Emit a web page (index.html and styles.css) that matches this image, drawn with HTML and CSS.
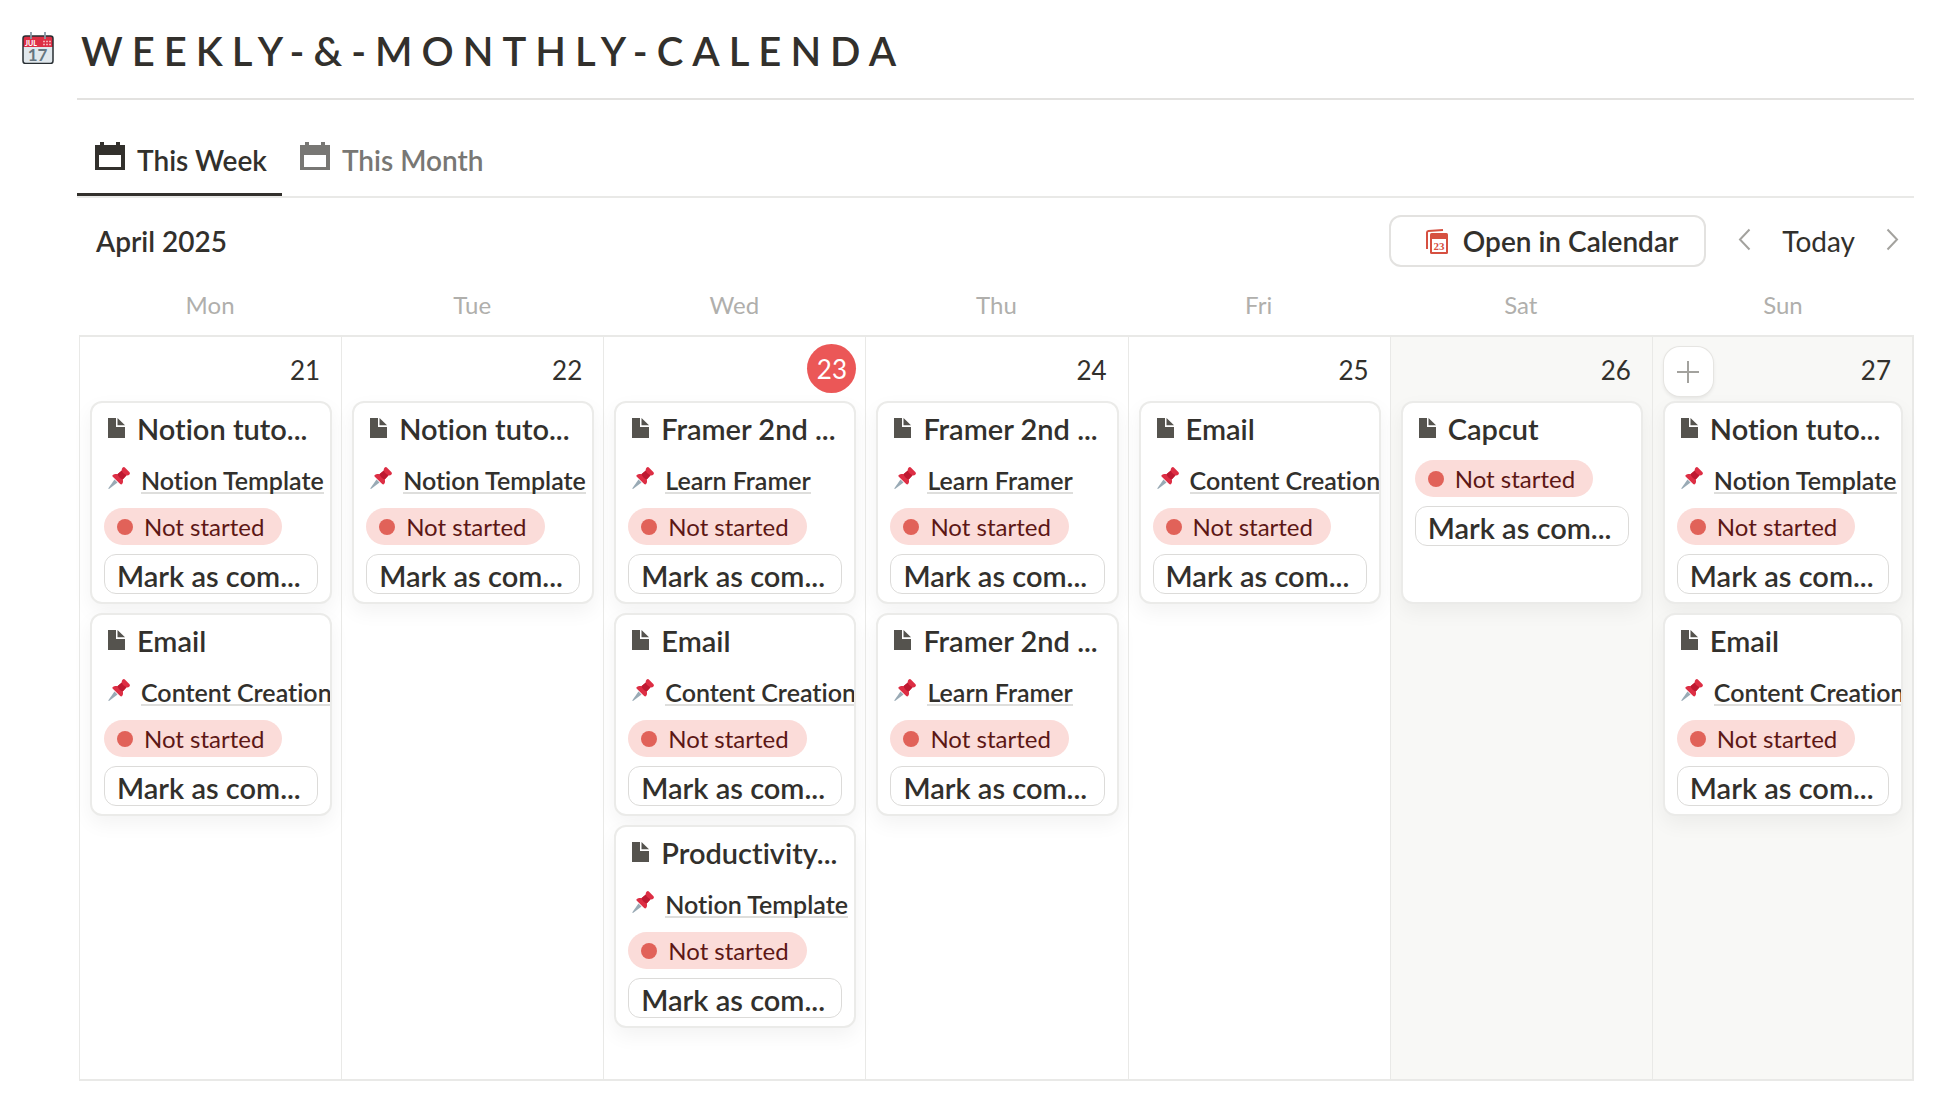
FILE: index.html
```html
<!DOCTYPE html>
<html lang="en">
<head>
<meta charset="utf-8">
<title>Weekly &amp; Monthly Calendar</title>
<link rel="stylesheet" href="styles.css">
</head>
<body>
<svg class="sprite" aria-hidden="true">
  <symbol id="i-page" viewBox="0 0 17 20"><path fill="#55534e" d="M0 0h8v9h9v11H0z"/><path fill="#55534e" d="M9.500 0L17 7.200H9.500z"/></symbol>
  <symbol id="i-pin" viewBox="0 0 22 22">
    <path fill="#99aab5" d="M6.500 12.500l3 3L1 22l-.8-.6z"/>
    <path fill="#dd2e44" d="M14.500.8c.9-.9 1.800-.9 2.600-.1l4.200 4.200c.9.900.8 2-.1 2.800-.7.700-1.700.9-2.600.6l-3.900 4.200c.6 1.500.5 3.200-.6 4.600-.5.600-1.300.6-1.900 0L4.800 9.800c-.6-.6-.6-1.400 0-1.900 1.400-1.100 3.100-1.200 4.600-.6l4.400-3.900c-.2-.9 0-1.900.7-2.600z"/>
    <path fill="#be1931" d="M9.400 7.300l4.400-3.900c.3 1.200 1 2.300 1.900 3.200s1.900 1.500 2.900 1.700l-3.900 4.200c-1.100-.4-2.300-1-3.300-2-1-1.100-1.700-2.200-2-3.200z"/>
  </symbol>
  <symbol id="i-cal" viewBox="0 0 30 28"><path fill="currentColor" fill-rule="evenodd" d="M5 0h4v3h12V0h4v3h5v25H0V3h5zM4 13v12h22V13z"/></symbol>
</svg>

<main class="page">
  <header class="page-head">
    <svg class="emoji" viewBox="0 0 32 32" aria-hidden="true">
      <rect x="1" y="4" width="30" height="27.500" rx="2.500" fill="#e1e8ed"/>
      <path d="M1 6.500A2.500 2.500 0 0 1 3.500 4h25A2.500 2.500 0 0 1 31 6.500V15H1z" fill="#dd2e44"/>
      <rect x="1" y="4" width="30" height="27.500" rx="2.500" fill="none" stroke="#292f33" stroke-width="1.500"/>
      <path d="M9 0v7M23 0v7" stroke="#8899a6" stroke-width="1.800"/>
      <text x="3" y="13.500" class="emoji-month">JUL</text>
      <path d="M21 9.500h8M21 12.500h8" stroke="#f4abb4" stroke-width="1.500" stroke-dasharray="2 1"/>
      <text x="15.500" y="28.500" text-anchor="middle" class="emoji-day">17</text>
    </svg>
    <h1>WEEKLY-&amp;-MONTHLY-CALENDA</h1>
  </header>

  <section class="board">
    <nav class="tabs">
      <a class="tab active" href="#week"><svg class="tab-icon"><use href="#i-cal"/></svg>This Week</a>
      <a class="tab" href="#month"><svg class="tab-icon"><use href="#i-cal"/></svg>This Month</a>
    </nav>

    <div class="toolbar">
      <h2>April 2025</h2>
      <button class="open" type="button">
        <svg class="open-icon" viewBox="0 0 22 25" aria-hidden="true">
          <path d="M1 20V3.500Q1 2 2.500 1.900L17 1" fill="none" stroke="#d65041" stroke-width="2"/>
          <rect x="4" y="4" width="18" height="21" rx="1.500" fill="#d65041"/>
          <rect x="6" y="10" width="14" height="13" fill="#fff"/>
          <text x="13" y="21" text-anchor="middle" class="open-day">23</text>
        </svg>
        Open in Calendar
      </button>
      <button class="step" type="button" aria-label="Previous week"><svg viewBox="0 0 13 23"><path d="M11.500 1.500L2 11.500l9.500 10"/></svg></button>
      <button class="today" type="button">Today</button>
      <button class="step" type="button" aria-label="Next week"><svg viewBox="0 0 13 23"><path d="M1.500 1.500L11 11.500l-9.500 10"/></svg></button>
    </div>

    <table class="week">
      <thead>
        <tr><th scope="col">Mon</th><th scope="col">Tue</th><th scope="col">Wed</th><th scope="col">Thu</th><th scope="col">Fri</th><th scope="col">Sat</th><th scope="col">Sun</th></tr>
      </thead>
      <tbody>
        <tr>
          <td>
            <div class="day"><span class="num">21</span></div>
            <article class="card">
              <h3><svg class="doc"><use href="#i-page"/></svg>Notion tuto...</h3>
              <div class="rel"><svg class="pin"><use href="#i-pin"/></svg><a href="#p">Notion Template</a></div>
              <span class="status">Not started</span>
              <button class="mark" type="button">Mark as com...</button>
            </article>
            <article class="card">
              <h3><svg class="doc"><use href="#i-page"/></svg>Email</h3>
              <div class="rel"><svg class="pin"><use href="#i-pin"/></svg><a href="#p">Content Creation</a></div>
              <span class="status">Not started</span>
              <button class="mark" type="button">Mark as com...</button>
            </article>
          </td>
          <td>
            <div class="day"><span class="num">22</span></div>
            <article class="card">
              <h3><svg class="doc"><use href="#i-page"/></svg>Notion tuto...</h3>
              <div class="rel"><svg class="pin"><use href="#i-pin"/></svg><a href="#p">Notion Template</a></div>
              <span class="status">Not started</span>
              <button class="mark" type="button">Mark as com...</button>
            </article>
          </td>
          <td>
            <div class="day"><span class="num now">23</span></div>
            <article class="card">
              <h3><svg class="doc"><use href="#i-page"/></svg>Framer 2nd ...</h3>
              <div class="rel"><svg class="pin"><use href="#i-pin"/></svg><a href="#p">Learn Framer</a></div>
              <span class="status">Not started</span>
              <button class="mark" type="button">Mark as com...</button>
            </article>
            <article class="card">
              <h3><svg class="doc"><use href="#i-page"/></svg>Email</h3>
              <div class="rel"><svg class="pin"><use href="#i-pin"/></svg><a href="#p">Content Creation</a></div>
              <span class="status">Not started</span>
              <button class="mark" type="button">Mark as com...</button>
            </article>
            <article class="card">
              <h3><svg class="doc"><use href="#i-page"/></svg>Productivity...</h3>
              <div class="rel"><svg class="pin"><use href="#i-pin"/></svg><a href="#p">Notion Template</a></div>
              <span class="status">Not started</span>
              <button class="mark" type="button">Mark as com...</button>
            </article>
          </td>
          <td>
            <div class="day"><span class="num">24</span></div>
            <article class="card">
              <h3><svg class="doc"><use href="#i-page"/></svg>Framer 2nd ...</h3>
              <div class="rel"><svg class="pin"><use href="#i-pin"/></svg><a href="#p">Learn Framer</a></div>
              <span class="status">Not started</span>
              <button class="mark" type="button">Mark as com...</button>
            </article>
            <article class="card">
              <h3><svg class="doc"><use href="#i-page"/></svg>Framer 2nd ...</h3>
              <div class="rel"><svg class="pin"><use href="#i-pin"/></svg><a href="#p">Learn Framer</a></div>
              <span class="status">Not started</span>
              <button class="mark" type="button">Mark as com...</button>
            </article>
          </td>
          <td>
            <div class="day"><span class="num">25</span></div>
            <article class="card">
              <h3><svg class="doc"><use href="#i-page"/></svg>Email</h3>
              <div class="rel"><svg class="pin"><use href="#i-pin"/></svg><a href="#p">Content Creation</a></div>
              <span class="status">Not started</span>
              <button class="mark" type="button">Mark as com...</button>
            </article>
          </td>
          <td class="weekend">
            <div class="day"><span class="num">26</span></div>
            <article class="card">
              <h3><svg class="doc"><use href="#i-page"/></svg>Capcut</h3>
              <span class="status">Not started</span>
              <button class="mark" type="button">Mark as com...</button>
            </article>
          </td>
          <td class="weekend">
            <div class="day">
              <button class="add" type="button" aria-label="Add item"><svg viewBox="0 0 24 24"><path d="M12 1v22M1 12h22"/></svg></button>
              <span class="num">27</span>
            </div>
            <article class="card">
              <h3><svg class="doc"><use href="#i-page"/></svg>Notion tuto...</h3>
              <div class="rel"><svg class="pin"><use href="#i-pin"/></svg><a href="#p">Notion Template</a></div>
              <span class="status">Not started</span>
              <button class="mark" type="button">Mark as com...</button>
            </article>
            <article class="card">
              <h3><svg class="doc"><use href="#i-page"/></svg>Email</h3>
              <div class="rel"><svg class="pin"><use href="#i-pin"/></svg><a href="#p">Content Creation</a></div>
              <span class="status">Not started</span>
              <button class="mark" type="button">Mark as com...</button>
            </article>
          </td>
        </tr>
      </tbody>
    </table>
  </section>
</main>
</body>
</html>
```
FILE: styles.css
```css
* { box-sizing: border-box; }
body {
  margin: 0;
  background: #fff;
  color: #32302c;
  font-family: Lato, "Open Sans", sans-serif;
  font-size: 28px;
  line-height: 36px;
  font-variant-ligatures: none;
}
h1, h2, h3 { margin: 0; font-weight: 600; }
h2 { font-size: 28px; }
h3 { font-size: 29px; }
button { font: inherit; font-variant-ligatures: none; color: inherit; margin: 0; padding: 0; border: 0; background: none; }
a { color: inherit; text-decoration: none; }
svg { flex: none; display: block; }
.sprite { position: absolute; width: 0; height: 0; }

.page { padding: 0 34px 18px 22px; }
.page-head { display: flex; align-items: center; gap: 27px; padding: 26px 0 22px; }
.page-head h1 { font-size: 40px; line-height: 50px; letter-spacing: 9px; white-space: nowrap; }
.emoji { width: 32px; height: 32px; margin-bottom: 6px; }
.emoji-month { font: 900 7px Lato, sans-serif; fill: #fff; }
.emoji-day { font: 700 17px Lato, sans-serif; fill: #66757f; }

.board { margin-left: 55px; border-top: 2px solid #e3e2e0; }
.tabs { display: flex; padding-top: 26px; border-bottom: 2px solid #e9e9e7; }
.tab {
  display: flex;
  align-items: center;
  gap: 12px;
  height: 70px;
  padding: 0 15px 0 18px;
  font-weight: 600;
  color: #787774;
  border-bottom: 3px solid transparent;
}
.tab.active { color: #32302c; border-color: #32302c; }
.tab-icon { width: 30px; height: 28px; margin-bottom: 8px; }

.toolbar { display: flex; align-items: center; padding: 17px 15px 12px 19px; }
.toolbar h2 { flex: 1; }
.open {
  display: flex;
  align-items: center;
  gap: 15px;
  height: 52px;
  padding: 0 26px 0 35px;
  margin-right: 32px;
  border: 2px solid #e3e2e0;
  border-radius: 12px;
  font-weight: 600;
}
.open-icon { width: 22px; height: 25px; }
.open-day { font: 700 11px "Liberation Serif", serif; fill: #d65041; }
.step svg { width: 13px; height: 23px; margin-bottom: 3px; fill: none; stroke: #a3a29e; stroke-width: 2; }
.today { margin: 0 31px; }

.week { width: calc(100% - 2px); margin-left: 2px; table-layout: fixed; border-collapse: separate; border-spacing: 0; }
.week th { height: 56px; padding: 0 0 4px; font-size: 24px; font-weight: 400; color: #b0afac; }
.week td {
  vertical-align: top;
  padding: 7px 9px 51px 10px;
  border: solid #e9e9e7;
  border-width: 2px 0 2px 1px;
}
.week td:last-child { border-right-width: 2px; }
.weekend { background: #f8f8f6; }
.day { display: flex; align-items: center; height: 49px; margin-bottom: 8px; }
.num { margin-left: auto; padding: 2px 12px 0 0; font-size: 26px; }
.num.now {
  width: 49px;
  height: 49px;
  padding: 0;
  line-height: 50px;
  text-align: center;
  border-radius: 50%;
  color: #fff;
  background: #eb5757;
}
.add {
  display: grid;
  place-items: center;
  width: 49px;
  height: 49px;
  margin: 6px 0 0 1px;
  background: #fff;
  border-radius: 16px;
  box-shadow: 0 0 0 1px #e6e5e2, 0 2px 4px #0f0f0f1a;
}
.add svg { width: 24px; height: 24px; fill: none; stroke: #a3a29e; stroke-width: 2; }

.card {
  display: flex;
  flex-direction: column;
  align-items: flex-start;
  height: 203px;
  padding: 7px 12px;
  overflow: hidden;
  background: #fff;
  border: 2px solid #ebebe9;
  border-radius: 12px;
  box-shadow: 0 8px 20px #0f0f0f0d;
}
.card + .card { margin-top: 9px; }
.card h3 { display: flex; align-items: center; gap: 12px; height: 37px; margin-left: 4px; white-space: nowrap; }
.doc { width: 17px; height: 20px; margin-bottom: 2px; }
.rel {
  display: flex;
  align-items: center;
  gap: 11px;
  height: 48px;
  padding-top: 20px;
  margin-left: 4px;
  font-size: 25px;
  line-height: 24px;
  font-weight: 600;
  white-space: nowrap;
}
.rel a { border-bottom: 2px solid #dededc; }
.pin { width: 22px; height: 22px; margin-bottom: 6px; }
.status {
  display: flex;
  align-items: center;
  gap: 11px;
  flex: none;
  height: 37px;
  margin-top: 13px;
  padding: 0 18px 0 13px;
  border-radius: 19px;
  background: #fbdcd9;
  color: #5d1715;
  font-size: 24px;
  line-height: 32px;
}
.status::before { content: ""; width: 16px; height: 16px; border-radius: 50%; background: #e16259; }
.mark {
  flex: none;
  align-self: stretch;
  height: 40px;
  margin-top: 9px;
  padding: 3px 0 0 12px;
  text-align: left;
  font-size: 29px;
  line-height: 32px;
  font-weight: 600;
  white-space: nowrap;
  border: 1px solid #dcdbd9;
  border-radius: 12px;
}
```
